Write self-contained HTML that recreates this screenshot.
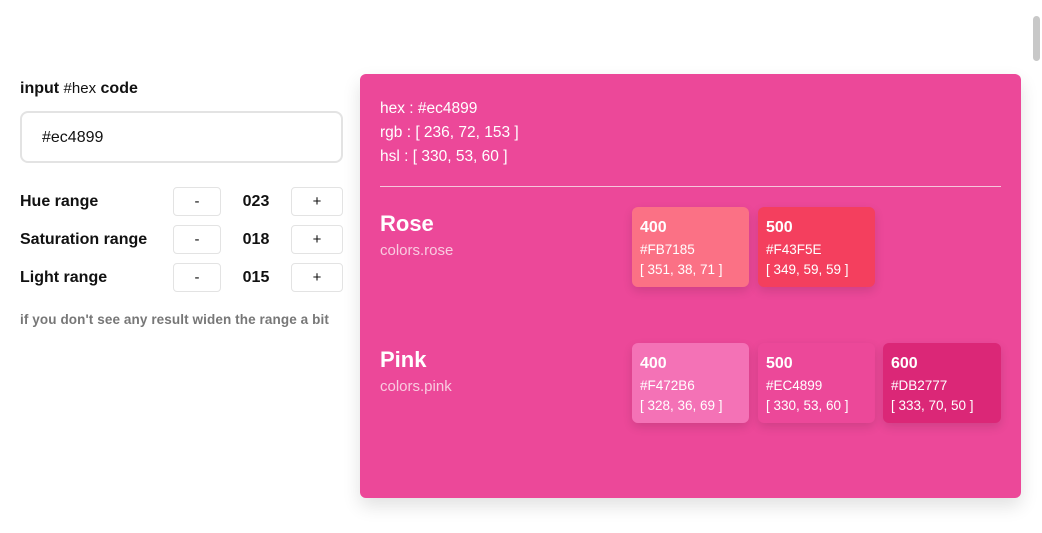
<!DOCTYPE html>
<html><head><meta charset="utf-8"><style>
*{margin:0;padding:0;box-sizing:border-box}
body{width:1042px;height:533px;background:#fff;position:relative;overflow:hidden;font-family:"Liberation Sans",sans-serif;color:#111}
.a{position:absolute;white-space:nowrap}
.lbl{font-weight:bold;font-size:16px;line-height:20px}
.btn{position:absolute;width:48px;height:29px;border:1px solid #e3e3e3;border-radius:4px;text-align:center;font-size:15px;line-height:27px;color:#111}
.val{position:absolute;font-weight:bold;font-size:16px;line-height:20px;width:50px;text-align:center}
.panel{position:absolute;left:360px;top:74px;width:661px;height:424px;background:#ec4899;border-radius:6px;box-shadow:0 8px 18px rgba(0,0,0,.12)}
.w{color:#fff}
.sw{position:absolute;width:117px;height:80px;border-radius:6px;box-shadow:0 4px 10px rgba(0,0,0,.12);color:#fff;padding:0 8px}
.sw b{position:absolute;left:8px;top:12px;font-size:16px;line-height:18px}
.sw .h{position:absolute;left:8px;top:35px;font-size:13.5px;line-height:16px}
.sw .l{position:absolute;left:8px;top:55px;font-size:13.5px;line-height:16px}
</style></head><body>
<div style="position:absolute;left:1033px;top:16px;width:7px;height:45px;border-radius:4px;background:#c8c8c8"></div>
<div class="a lbl" style="left:20px;top:79px">input <span style="font-weight:normal;font-size:15px">#hex</span> code</div>
<div style="position:absolute;left:20px;top:111px;width:323px;height:52px;border:2px solid #e3e3e3;border-radius:8px"></div>
<div class="a" style="left:42px;top:128px;font-size:16px;line-height:20px">#ec4899</div>

<div class="a lbl" style="left:20px;top:192px">Hue range</div>
<div class="btn" style="left:173px;top:187px">-</div><div class="val" style="left:231px;top:192px">023</div><div class="btn" style="left:291px;top:187px;width:52px">+</div>
<div class="a lbl" style="left:20px;top:230px">Saturation range</div>
<div class="btn" style="left:173px;top:225px">-</div><div class="val" style="left:231px;top:230px">018</div><div class="btn" style="left:291px;top:225px;width:52px">+</div>
<div class="a lbl" style="left:20px;top:268px">Light range</div>
<div class="btn" style="left:173px;top:263px">-</div><div class="val" style="left:231px;top:268px">015</div><div class="btn" style="left:291px;top:263px;width:52px">+</div>
<div class="a" style="left:20px;top:312px;font-size:13.5px;font-weight:bold;color:#777;line-height:16px;letter-spacing:0.1px">if you don't see any result widen the range a bit</div>

<div class="panel">
<div class="a w" style="left:20px;top:23px;font-size:15.5px;line-height:24px">hex : #ec4899<br>rgb : [ 236, 72, 153 ]<br>hsl : [ 330, 53, 60 ]</div>
<div style="position:absolute;left:20px;top:112px;width:621px;height:1px;background:#f6c6dc"></div>
<div class="a w" style="left:20px;top:137px;font-size:22px;font-weight:bold;line-height:26px">Rose</div>
<div class="a" style="left:20px;top:168px;font-size:15px;color:#f9cbe0;line-height:18px">colors.rose</div>
<div class="a w" style="left:20px;top:273px;font-size:22px;font-weight:bold;line-height:26px">Pink</div>
<div class="a" style="left:20px;top:304px;font-size:15px;color:#f9cbe0;line-height:18px">colors.pink</div>

<div class="sw" style="left:272px;top:133px;background:#fb7185"><b>400</b><div class="h">#FB7185</div><div class="l">[ 351, 38, 71 ]</div></div>
<div class="sw" style="left:398px;top:133px;background:#f43f5e"><b>500</b><div class="h">#F43F5E</div><div class="l">[ 349, 59, 59 ]</div></div>
<div class="sw" style="left:272px;top:269px;background:#f472b6"><b>400</b><div class="h">#F472B6</div><div class="l">[ 328, 36, 69 ]</div></div>
<div class="sw" style="left:398px;top:269px;background:#ec4899"><b>500</b><div class="h">#EC4899</div><div class="l">[ 330, 53, 60 ]</div></div>
<div class="sw" style="left:523px;top:269px;width:118px;background:#db2777"><b>600</b><div class="h">#DB2777</div><div class="l">[ 333, 70, 50 ]</div></div>
</div>
</body></html>
